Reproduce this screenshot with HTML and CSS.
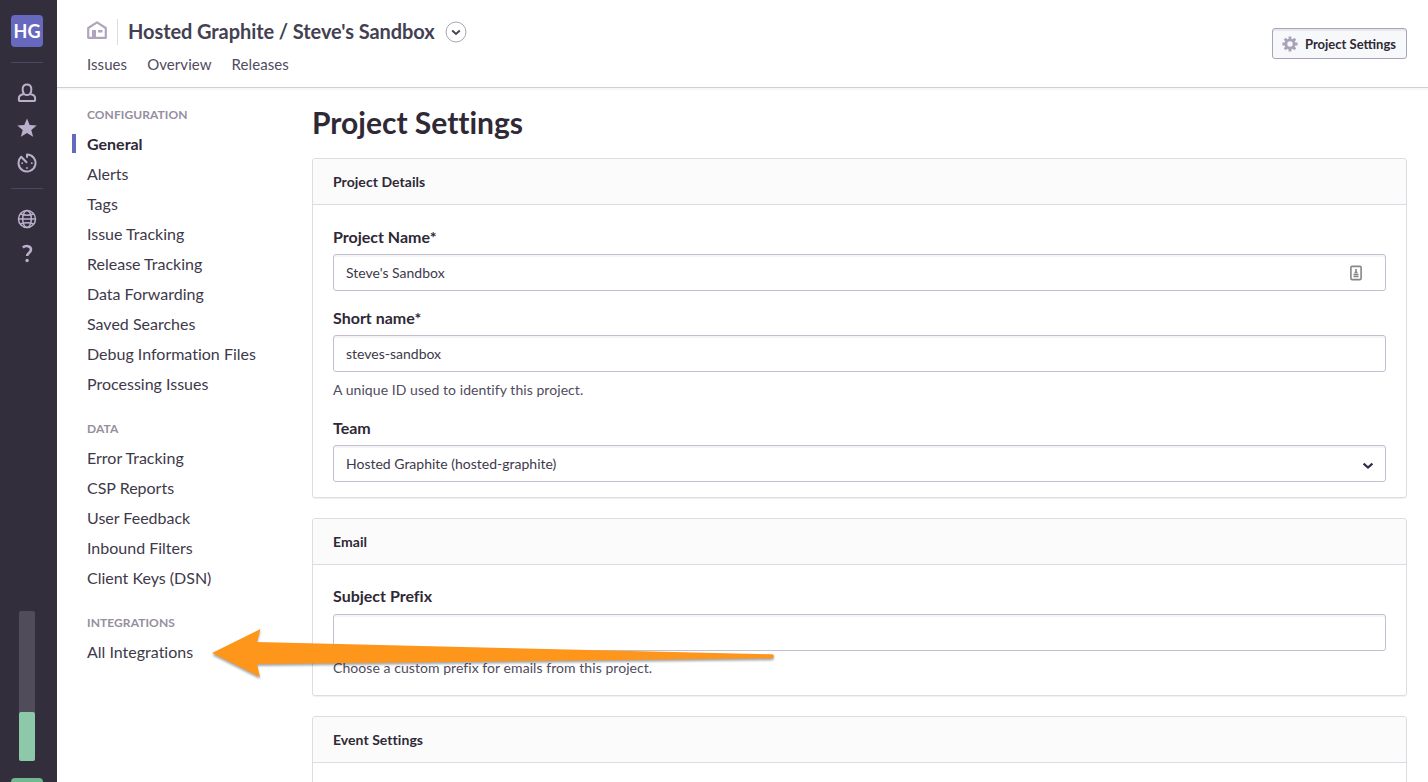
FILE: index.html
```html
<!DOCTYPE html>
<html lang="en">
<head>
<meta charset="utf-8">
<title>Project Settings</title>
<link rel="stylesheet" href="styles.css">
</head>
<body>
<div class="app">
  <aside class="rail">
    <div class="avatar">HG</div>
    <hr class="rail-line">
    <nav class="rail-icons">
      <svg class="rail-icon" viewBox="0 0 20 20"><path class="stroke" d="M7 11C5.700 9.500 5.500 7 5.700 5.200 6 2.700 7.500 1.400 10 1.400s4 1.300 4.300 3.800C14.500 7 14.300 9.500 13 11c3 .6 5.100 1.800 5.100 4v2.200q0 .8-.8.800H2.700q-.8 0-.8-.8V15c0-2.200 2.100-3.400 5.100-4zM7 11q3 2.200 6 0"/></svg>
      <svg class="rail-icon" viewBox="0 0 20 20"><path class="fill" d="M10 .4l2.700 6.500 7 .5-5.400 4.500 1.800 6.900L10 15l-6.100 3.800 1.800-6.900L.3 7.400l7-.5z"/></svg>
      <svg class="rail-icon" viewBox="0 0 20 20"><path class="stroke" d="M10 4.800V1.500A8.500 8.500 0 1 1 4.200 3.800L10 9.800"/><g class="fill"><circle cx="5.200" cy="10.200" r=".9"/><circle cx="14.800" cy="10.200" r=".9"/><circle cx="10" cy="15" r=".9"/></g></svg>
    </nav>
    <hr class="rail-line">
    <nav class="rail-icons rail-icons-low">
      <svg class="rail-icon" viewBox="0 0 20 20"><g class="stroke thin"><circle cx="10" cy="10" r="8.500"/><ellipse cx="10" cy="10" rx="4.300" ry="8.500"/><path d="M1.500 10h17M3.500 5q6.500 2.400 13 0M3.500 15q6.500-2.400 13 0"/></g></svg>
      <svg class="rail-icon" viewBox="0 0 20 20"><path class="stroke question" d="M5.800 3.500C8.500 1.200 14 1.600 14 5.600c0 3.200-3.800 3-3.800 6.400"/><circle class="fill" cx="10.100" cy="16.500" r="1.700"/></svg>
    </nav>
    <div class="meter"><div class="meter-fill"></div></div>
    <div class="rail-tile"></div>
  </aside>

  <div class="page">
    <header class="top">
      <div class="top-left">
        <div class="crumb">
          <svg class="home" viewBox="0 0 20 18"><path class="home-line" d="M1.200 16.800V7L10 1.300 18.800 7v9.800z"/><path class="home-fill" d="M5 9h4v8H5zM11 9h4.500v2.500H11z"/></svg>
          <h1 class="title">Hosted Graphite / Steve's Sandbox</h1>
          <svg class="switch" viewBox="0 0 22 22"><circle cx="11" cy="11" r="10"/><path d="M7.200 9.500l3.800 3.400 3.800-3.400"/></svg>
        </div>
        <nav class="tabs"><a>Issues</a><a>Overview</a><a>Releases</a></nav>
      </div>
      <button class="settings-button">
        <svg class="gear" viewBox="0 0 16 16"><circle cx="8" cy="8" r="4.100"/><path d="M8 .4v3M8 12.600v3M.4 8h3M12.600 8h3M2.700 2.700l2.100 2.100M11.200 11.200l2.100 2.100M2.700 13.300l2.100-2.100M11.200 4.800l2.100-2.100"/></svg>
        <span>Project Settings</span>
      </button>
    </header>

    <div class="columns">
      <nav class="side">
        <h6 class="side-head">CONFIGURATION</h6>
        <ul class="side-list">
          <li class="current">General</li><li>Alerts</li><li>Tags</li><li>Issue Tracking</li><li>Release Tracking</li><li>Data Forwarding</li><li>Saved Searches</li><li>Debug Information Files</li><li>Processing Issues</li>
        </ul>
        <h6 class="side-head">DATA</h6>
        <ul class="side-list">
          <li>Error Tracking</li><li>CSP Reports</li><li>User Feedback</li><li>Inbound Filters</li><li>Client Keys (DSN)</li>
        </ul>
        <h6 class="side-head">INTEGRATIONS</h6>
        <ul class="side-list"><li>All Integrations</li></ul>
      </nav>

      <main class="main">
        <h2 class="heading">Project Settings</h2>
        <section class="panel">
          <h3 class="panel-head">Project Details</h3>
          <div class="panel-body">
            <div class="field">
              <label class="label">Project Name*</label>
              <div class="input"><span>Steve's Sandbox</span>
                <svg class="card-icon" viewBox="0 0 12 16"><rect x=".9" y="1.400" width="10.200" height="13.200" rx="1"/><path d="M6 4v3M4.500 7.500h3M3.500 9.500h5M3.500 11.500h5"/></svg>
              </div>
            </div>
            <div class="field">
              <label class="label">Short name*</label>
              <div class="input"><span>steves-sandbox</span></div>
              <p class="help">A unique ID used to identify this project.</p>
            </div>
            <div class="field">
              <label class="label">Team</label>
              <div class="input"><span>Hosted Graphite (hosted-graphite)</span>
                <svg class="chevron" viewBox="0 0 12 8"><path d="M1.600 1.600L6 5.600l4.400-4"/></svg>
              </div>
            </div>
          </div>
        </section>
        <section class="panel">
          <h3 class="panel-head">Email</h3>
          <div class="panel-body email-body">
            <div class="field">
              <label class="label">Subject Prefix</label>
              <div class="input"></div>
              <p class="help">Choose a custom prefix for emails from this project.</p>
            </div>
          </div>
        </section>
        <section class="panel">
          <h3 class="panel-head">Event Settings</h3>
          <div class="panel-body"></div>
        </section>
      </main>
    </div>
  </div>
  <svg class="arrow" viewBox="0 0 580 70"><path d="M12 33L60.500 9 57 22 572 34.300Q574 34.500 574 36.300T572 38.300L57 44 60 57z"/></svg>
</div>
</body>
</html>
```

FILE: styles.css
```css
* { box-sizing: border-box; }
body { margin: 0; font-family: Lato, "Liberation Sans", sans-serif; font-size: 16px; font-variant-ligatures: none; color: #2f2936; background: #fff; }
h1, h2, h3, h6, p, ul { margin: 0; padding: 0; }
.app { position: relative; display: flex; width: 1428px; height: 782px; overflow: hidden; }

.rail { display: flex; flex-direction: column; align-items: center; width: 57px; height: 782px; padding: 15px 3px 0 0; background: #322e3c; flex: none; overflow: hidden; }
.avatar { width: 32px; height: 32px; border-radius: 4px; background: #6669be; color: #fff; font-size: 18px; font-weight: 700; line-height: 32px; text-align: center; flex: none; }
.rail-line { width: 32px; height: 1px; margin: 15px 0 0; border: 0; background: #4d4665; flex: none; }
.rail-icons { display: flex; flex-direction: column; gap: 15px; margin-top: 20px; }
.rail-icon { display: block; width: 20px; height: 20px; }
.stroke { fill: none; stroke: #b9b1cc; stroke-width: 2; stroke-linejoin: round; }
.thin { stroke-width: 1.5; }
.question { stroke-width: 2.6; }
.fill { fill: #b9b1cc; }
.meter { display: flex; align-items: flex-end; width: 16px; height: 150px; margin-top: auto; border-radius: 2px; background: #504c59; flex: none; }
.meter-fill { width: 16px; height: 49px; border-radius: 2px; background: #8dc9a8; }
.rail-tile { width: 32px; height: 4px; margin-top: 17px; border-radius: 4px 4px 0 0; background: #70b98f; flex: none; }

.page { flex: 1; min-width: 0; }
.top { display: flex; justify-content: space-between; height: 88px; padding: 18px 21px 0 30px; border-bottom: 1px solid #d0d0d4; box-shadow: 0 2px 0 #f7f7f8; }
.crumb { display: flex; align-items: center; height: 28px; }
.home { width: 20px; height: 18px; margin-top: -4px; }
.home-line { fill: none; stroke: #afa6bd; stroke-width: 2.2; stroke-linejoin: round; }
.home-fill { fill: #afa6bd; }
.title { margin-left: 10px; padding-left: 10px; border-left: 1px solid #dddbe2; font-size: 20px; line-height: 24px; padding-bottom: 2px; font-weight: 700; letter-spacing: -.08px; color: #443f52; white-space: nowrap; }
.switch { width: 22px; height: 22px; margin-left: 10px; fill: none; stroke: #aaa2ba; stroke-width: 1; }
.switch path { stroke: #4a4458; stroke-width: 2; }
.tabs { display: flex; gap: 20px; margin-top: 7px; font-size: 15px; line-height: 22px; letter-spacing: .07px; color: #504b60; }
.settings-button { display: flex; align-items: center; width: 135px; height: 31px; margin-top: 10px; padding: 1px 0 0 9px; border: 1px solid #aaa2bc; border-radius: 3px; background: #f7f8fa; box-shadow: inset 0 2px 0 #e8e8ec; color: #2f2936; font: 700 13px Lato, sans-serif; white-space: nowrap; }
.gear { width: 16px; height: 16px; margin-right: 7px; fill: none; stroke: #aaa2b8; stroke-width: 2.8; }

.columns { display: flex; }
.side { width: 255px; padding: 17px 0 0 30px; flex: none; }
.side-head { height: 24px; font-size: 12px; font-weight: 700; line-height: 20px; letter-spacing: .08px; color: #958e9f; }
.side-list { margin-bottom: 20px; list-style: none; line-height: 30px; color: #3e394a; white-space: nowrap; }
.side-list li { height: 30px; }
.side-list .current { position: relative; font-weight: 700; color: #2f2936; }
.current::before { content: ""; position: absolute; left: -15px; top: 5px; width: 4px; height: 19px; background: #6669be; }

.main { flex: 1; padding: 14px 21px 0 0; }
.heading { height: 56px; font-size: 30px; line-height: 40px; font-weight: 700; }
.panel { margin-bottom: 20px; border: 1px solid #dedce3; border-radius: 3px; box-shadow: 0 1px 1px #f1f1f3; }
.panel-head { height: 46px; padding-left: 20px; border-bottom: 1px solid #dedce3; border-radius: 3px 3px 0 0; background: #fbfbfc; font-size: 14px; line-height: 46px; font-weight: 700; letter-spacing: .05px; }
.panel-body { display: flex; flex-direction: column; gap: 16px; padding: 21px 20px 15px; }
.label { display: block; height: 28px; font-size: 16px; line-height: 22px; font-weight: 700; }
.input { display: flex; align-items: center; justify-content: space-between; height: 37px; padding: 0 12px; border: 1px solid #c4bfd0; border-radius: 3px; box-shadow: inset 0 2px 0 #f5f4f7; font-size: 14px; color: #3e394a; }
.help { height: 29px; padding-top: 7px; font-size: 14px; line-height: 22px; letter-spacing: .06px; color: #504b60; }
.email-body { padding-top: 20px; }
.email-body .label { height: 29px; }
.email-body .help { padding-top: 6px; }
.card-icon { width: 12px; height: 16px; margin-right: 11px; fill: none; stroke: #868686; stroke-width: 1.6; }
.chevron { width: 12px; height: 8px; margin: 4px -1px 0 0; fill: none; stroke: #2f3148; stroke-width: 2.2; }
.arrow { position: absolute; left: 200px; top: 620px; width: 580px; height: 70px; fill: #ff961c; filter: drop-shadow(0 2px 1px rgba(0, 0, 0, .35)); }
```
